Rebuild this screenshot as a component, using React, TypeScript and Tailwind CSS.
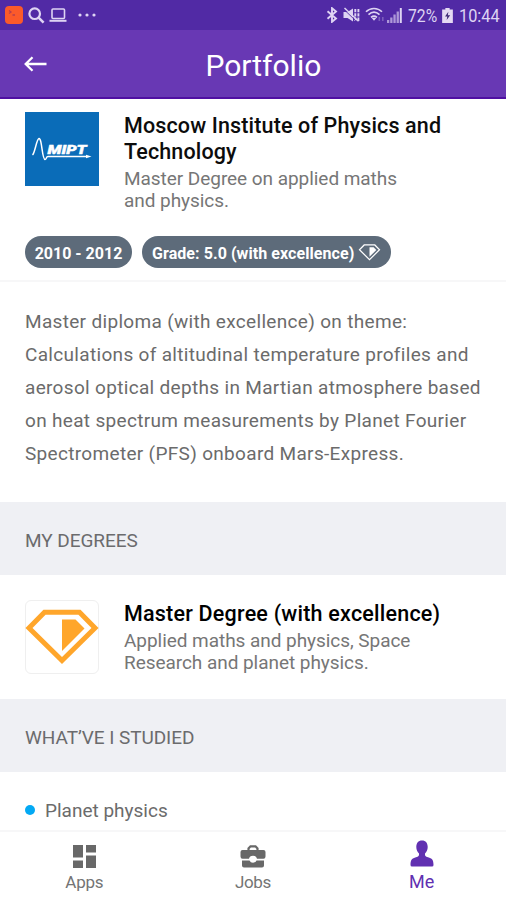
import React from "react";

function Diamond({ className, color, stroke }: { className: string; color: string; stroke: number }) {
  return (
    <svg viewBox="0 0 74 56" className={className} fill="none">
      <path d="M19.5 3.2H54.5L70 19L37 51.5L4 19Z" stroke={color} strokeWidth={stroke} />
      <path d="M37 10.500H50.500L59.500 19.500L37 42Z" fill={color} />
    </svg>
  );
}

function StatusBar() {
  return (
    <div className="flex h-[30px] shrink-0 items-center bg-[#512aa5] pl-[5px] text-[#ded4f3]">
      <svg viewBox="0 0 18 18" className="size-[18px]">
        <rect width="18" height="18" rx="4" fill="#fb5a2a" />
        <path d="M4 4.5L6 6L4 7.5M7.5 9H10" stroke="#b83e4e" strokeWidth="1.3" fill="none" />
      </svg>
      <svg viewBox="0 0 17 17" className="ml-[5px] size-[17px]" fill="none" stroke="currentColor">
        <circle cx="6.7" cy="6.7" r="5.3" strokeWidth="2.2" />
        <path d="M10.6 10.6L15.6 15.6" strokeWidth="2.6" />
      </svg>
      <svg viewBox="0 0 18 15" className="ml-[4px] h-[15px] w-[18px]" fill="none" stroke="currentColor">
        <rect x="3" y="1" width="12.5" height="9.5" rx="1" strokeWidth="1.6" />
        <path d="M0.5 12.8H17.5" strokeWidth="2" />
      </svg>
      <svg viewBox="0 0 18 4" className="ml-[11px] h-[4px] w-[18px]" fill="currentColor">
        <circle cx="2" cy="2" r="1.6" />
        <circle cx="9" cy="2" r="1.6" />
        <circle cx="16" cy="2" r="1.6" />
      </svg>
      <svg viewBox="0 0 12 16" className="ml-[230px] h-[16px] w-[12px]" fill="none" stroke="currentColor" strokeWidth="1.9">
        <path d="M1.5 4.2L10 11.5L6 14.8V1.2L10 4.5L1.5 11.8" />
      </svg>
      <svg viewBox="0 0 17 16" className="ml-[5px] h-[16px] w-[17px]" fill="currentColor">
        <path d="M0.5 5H4.5L10 1.5V14.5L4.500 11H0.5Z" />
        <path d="M12.3 2V14M15.4 2V14" stroke="currentColor" strokeWidth="1.9" strokeDasharray="3.3 1" />
        <path d="M0.5 2L14 15" stroke="#512aa5" strokeWidth="0.9" />
        <path d="M1.5 1L15.5 14.2" stroke="currentColor" strokeWidth="1.5" />
      </svg>
      <svg viewBox="0 0 20 16" className="ml-[5px] h-[16px] w-[20px]" fill="none" stroke="currentColor" strokeWidth="1.6">
        <path d="M1 4.8C5.5 0.4 12.5 0.4 17 4.8M3.5 7.7C7 4.5 11 4.5 14.5 7.7M6 10.3C8 8.7 10 8.7 12 10.3" />
        <path d="M6.5 10.8H11.5L9 13.8Z" fill="currentColor" stroke="none" />
        <path d="M14.3 10V14M17.8 10V14" strokeOpacity=".3" />
      </svg>
      <svg viewBox="0 0 15 15" className="ml-[2px] h-[15px] w-[15px]" fill="currentColor">
        <path d="M0 12H2.3V15H0ZM3.2 9.5H5.500V15H3.2ZM6.4 6.5H8.700V15H6.4ZM9.6 3.5H11.900V15H9.6Z" opacity=".65" />
        <path d="M12.8 0H14.8V15H12.8Z" />
      </svg>
      <span className="ml-[6px] w-[30px] text-[18.5px] leading-[30px]">
        <span className="inline-block origin-left scale-x-[0.85] pt-[2px]">72%</span>
      </span>
      <svg viewBox="0 0 10 14" className="ml-[4px] h-[15px] w-[11px]">
        <path d="M3 0H7V1.5H10V14H0V1.5H3Z" fill="#e5daf3" />
        <path d="M5.8 3.5L2.7 8H4.8L4.2 11.3L7.5 6.8H5.3Z" fill="#3f2a75" />
      </svg>
      <span className="ml-[6px] w-[42px] text-[18.5px] leading-[30px]">
        <span className="inline-block origin-left scale-x-[0.88] pt-[2px]">10:44</span>
      </span>
    </div>
  );
}

function Header() {
  return (
    <header className="flex h-[69px] shrink-0 items-center border-b-2 border-[#5010a2] bg-[#6838b4] pl-[24px] text-white">
      <svg viewBox="0 0 23 16" className="mt-px h-[16px] w-[23px]" fill="none" stroke="currentColor" strokeWidth="2.3">
        <path d="M22.5 8H1.8M8.5 1.2L1.7 8L8.5 14.8" />
      </svg>
      <h1 className="ml-[158.500px] pt-[5px] text-[30px] leading-[36px]">Portfolio</h1>
    </header>
  );
}

function SectionTitle({ children }: { children: React.ReactNode }) {
  return (
    <h2 className="flex h-[73px] shrink-0 items-center bg-[#eff0f4] pl-[25px] pt-[5px] text-[19px] tracking-[-0.05px] text-[#6b6b6d]">
      {children}
    </h2>
  );
}

function MiptLogo() {
  return (
    <svg viewBox="0 0 74 74" className="size-[74px] shrink-0">
      <rect width="74" height="74" fill="#0a6cb8" />
      <path
        d="M7.5 43C10 41 11.5 27 14 26.5C17 26 17 47.500 20 47.500C21.500 47.500 21 44.500 23 44.500H62"
        fill="none"
        stroke="#fff"
        strokeWidth="1.5"
      />
      <path d="M61 42.700L66.500 44.500L61 46.300Z" fill="#fff" />
      <text x="22.500" y="42" fill="#fff" stroke="#fff" strokeWidth=".5" fontSize="13.500" fontWeight="900" fontStyle="italic" textLength="39" lengthAdjust="spacingAndGlyphs">
        MIPT
      </text>
    </svg>
  );
}

export default function App() {
  return (
    <div className="flex h-[900px] w-[506px] flex-col overflow-hidden bg-white font-['Roboto',sans-serif]">
      <StatusBar />
      <Header />
      <section className="flex h-[183px] shrink-0 flex-col border-b-2 border-[#f7f7f8] pl-[25px] pt-[13px]">
        <div className="flex gap-[25px]">
          <MiptLogo />
          <div className="whitespace-nowrap pt-px">
            <h3 className="text-[21.5px] font-medium leading-[26px] tracking-[0.14px] text-[#0c0c0c]">
              Moscow Institute of Physics and
              <br />
              Technology
            </h3>
            <p className="pt-[3px] text-[19px] leading-[22px] tracking-[-0.05px] text-[#767676]">
              Master Degree on applied maths
              <br />
              and physics.
            </p>
          </div>
        </div>
        <div className="mt-[24px] flex gap-[10px] whitespace-nowrap text-[16px] font-bold text-white">
          <span className="flex h-[32px] w-[107px] items-center justify-center rounded-full bg-[#5d6b7a] pt-[3px]">
            2010 - 2012
          </span>
          <span className="flex h-[32px] w-[249px] items-center rounded-full bg-[#5d6b7a] pl-[10px]">
            <span className="w-[206px] pt-[3px] tracking-[0.07px]">Grade: 5.0 (with excellence)</span>
            <Diamond className="h-[17px] w-[23px]" color="#fff" stroke={4} />
          </span>
        </div>
      </section>
      <p className="h-[220px] shrink-0 whitespace-nowrap pl-[25px] pt-[23px] text-[19px] leading-[33px] tracking-[0.32px] text-[#6b6b6b]">
        Master diploma (with excellence) on theme:
        <br />
        Calculations of altitudinal temperature profiles and
        <br />
        aerosol optical depths in Martian atmosphere based
        <br />
        on heat spectrum measurements by Planet Fourier
        <br />
        Spectrometer (PFS) onboard Mars-Express.
      </p>
      <SectionTitle>MY DEGREES</SectionTitle>
      <section className="flex h-[124px] shrink-0 gap-[25px] pl-[25px] pt-[25px]">
        <div className="flex size-[74px] shrink-0 justify-center rounded-[6px] border border-[#efefef] pt-[8px]">
          <Diamond className="h-[56px] w-[74px] shrink-0" color="#ffa62b" stroke={5} />
        </div>
        <div className="whitespace-nowrap pt-px">
          <h3 className="text-[21.5px] font-medium leading-[26px] tracking-[0.22px] text-black">Master Degree (with excellence)</h3>
          <p className="pt-[3px] text-[19px] leading-[22px] tracking-[-0.05px] text-[#767676]">
            Applied maths and physics, Space
            <br />
            Research and planet physics.
          </p>
        </div>
      </section>
      <SectionTitle>WHAT’VE I STUDIED</SectionTitle>
      <div className="flex h-[58px] shrink-0 items-center gap-[10px] pl-[25px] pt-[18px] text-[19px] text-[#6b6b6b]">
        <span className="size-[10px] rounded-full bg-[#03a9f4]" />
        <span className="pt-[3px]">Planet physics</span>
      </div>
      <nav className="grid h-[70px] shrink-0 grid-cols-3 border-t-2 border-[#f7f7f8] text-[17px] leading-[20px] text-[#747474]">
        <div className="flex flex-col items-center pt-[13px]">
          <svg viewBox="0 0 23 23" className="size-[23px]" fill="#686868">
            <path d="M0 0H10V12.500H0ZM13 0H23V7.500H13ZM0 15.500H10V23H0ZM13 10.500H23V23H13Z" />
          </svg>
          <span className="pt-[4px] tracking-[-0.2px]">Apps</span>
        </div>
        <div className="flex flex-col items-center pt-[13px]">
          <svg viewBox="0 0 26 23" className="h-[23px] w-[26px]" fill="#686868">
            <path d="M8.500 6V3.500L10.500 1.300H15.500L17.500 3.500V6" fill="none" stroke="#686868" strokeWidth="2.200" />
            <path d="M2.500 5H23.500Q25.500 5 25.500 7V11.500Q25.500 13.700 23.500 13.700H17Q16.500 10.700 13 10.700Q9.500 10.700 9 13.700H2.500Q0.500 13.700 0.500 11.500V7Q0.500 5 2.500 5Z" />
            <path d="M2 15.500H9.500Q10.500 17.700 13 17.700Q15.500 17.700 16.500 15.500H24V20.500Q24 22.500 22 22.500H4Q2 22.500 2 20.500Z" />
          </svg>
          <span className="pt-[4px] tracking-[-0.3px]">Jobs</span>
        </div>
        <div className="flex flex-col items-center pt-[8px] text-[#6130b1]">
          <svg viewBox="0 0 24 27" className="h-[27px] w-[24px]" fill="currentColor">
            <path d="M12 0.500C15.800 0.500 17.700 3.200 17.700 7C17.700 9.800 16.500 12.200 15 13.500C14.700 15.700 15.500 16.700 18 17.300C22 18.300 23.500 20 23.500 25Q23.500 26.500 22 26.500H2Q0.500 26.500 0.500 25C0.500 20 2 18.300 6 17.300C8.500 16.700 9.300 15.700 9 13.500C7.500 12.200 6.300 9.800 6.300 7C6.300 3.200 8.200 0.500 12 0.500Z" />
          </svg>
          <span className="pt-[5px] text-[18px]">Me</span>
        </div>
      </nav>
    </div>
  );
}
